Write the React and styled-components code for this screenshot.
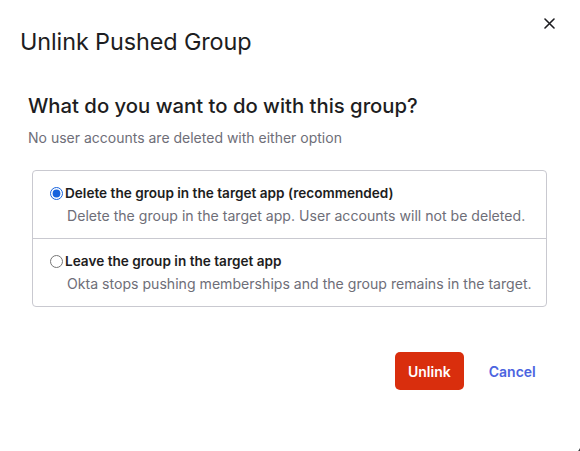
import React, { useState } from 'react'
import styled, { createGlobalStyle } from 'styled-components'

const Global = createGlobalStyle`
  html, body {
    margin: 0;
    padding: 0;
    background: #3b3b3f;
    overflow: hidden;
  }
  body {
    font-family: Inter, "Noto Sans", sans-serif;
    color: #1d1d21;
  }
`

const Dialog = styled.div`
  position: relative;
  box-sizing: border-box;
  width: 590px;
  height: 462px;
  margin: -7px 0 0 -9px;
  background: #fff;
  border-radius: 12px;
  padding: 34px 0 0 29px;
`

const CloseButton = styled.button`
  position: absolute;
  top: 18px;
  right: 20px;
  width: 24px;
  height: 24px;
  padding: 0;
  border: 0;
  background: none;
  display: flex;
  align-items: center;
  justify-content: center;
  color: #1d1d21;
`

const Title = styled.h1`
  margin: 0;
  font-size: 23.4px;
  font-weight: 400;
  line-height: 30px;
  letter-spacing: -0.1px;
`

const Body = styled.div`
  padding: 36px 0 0 8px;
`

const Question = styled.h2`
  margin: 0;
  font-size: 20.3px;
  font-weight: 500;
  line-height: 26px;
`

const Hint = styled.p`
  margin: 10px 0 0;
  font-size: 14px;
  line-height: 18px;
  color: #6e6e78;
`

const Options = styled.div`
  margin: 23px 0 0 4px;
  width: 513px;
  border: 1px solid #c9c9d0;
  border-radius: 4px;
`

const Option = styled.label`
  display: block;
  padding: 13px 0 13px 17px;
  border-top: ${p => (p.$first ? 'none' : '1px solid #c9c9d0')};
  cursor: pointer;
`

const OptionHead = styled.div`
  display: flex;
  align-items: center;
`

const Radio = styled.input`
  margin: 0 2px 0 0;
  width: 13px;
  height: 13px;
  accent-color: #1662dd;
`

const OptionTitle = styled.span`
  font-size: 13.6px;
  font-weight: 600;
  line-height: 18px;
`

const OptionDesc = styled.div`
  margin: 5px 0 0 17px;
  font-size: 14.1px;
  line-height: 18px;
  color: #6e6e78;
`

const Footer = styled.div`
  display: flex;
  align-items: center;
  gap: 25px;
  margin: 45px 0 0 367px;
`

const PrimaryButton = styled.button`
  height: 38px;
  padding: 0 13px;
  border: 0;
  border-radius: 5px;
  background: #d92e0d;
  color: #fff;
  font-family: inherit;
  font-size: 14px;
  font-weight: 600;
`

const LinkButton = styled.button`
  padding: 0;
  border: 0;
  background: none;
  color: #4c64e0;
  font-family: inherit;
  font-size: 14px;
  font-weight: 600;
`

const choices = [
  {
    id: 'delete',
    title: 'Delete the group in the target app (recommended)',
    desc: 'Delete the group in the target app. User accounts will not be deleted.'
  },
  {
    id: 'leave',
    title: 'Leave the group in the target app',
    desc: 'Okta stops pushing memberships and the group remains in the target.'
  }
]

export default function App() {
  const [choice, setChoice] = useState('delete')

  return (
    <>
      <Global />
      <Dialog>
        <CloseButton aria-label="Close">
          <svg width="11" height="11" viewBox="0 0 11 11">
            <path d="M1 1L10 10M10 1L1 10" stroke="currentColor" strokeWidth="1.6" strokeLinecap="round" />
          </svg>
        </CloseButton>
        <Title>Unlink Pushed Group</Title>
        <Body>
          <Question>What do you want to do with this group?</Question>
          <Hint>No user accounts are deleted with either option</Hint>
          <Options>
            {choices.map((c, i) => (
              <Option key={c.id} $first={i === 0}>
                <OptionHead>
                  <Radio
                    type="radio"
                    name="unlink"
                    checked={choice === c.id}
                    onChange={() => setChoice(c.id)}
                  />
                  <OptionTitle>{c.title}</OptionTitle>
                </OptionHead>
                <OptionDesc>{c.desc}</OptionDesc>
              </Option>
            ))}
          </Options>
          <Footer>
            <PrimaryButton>Unlink</PrimaryButton>
            <LinkButton>Cancel</LinkButton>
          </Footer>
        </Body>
      </Dialog>
    </>
  )
}
